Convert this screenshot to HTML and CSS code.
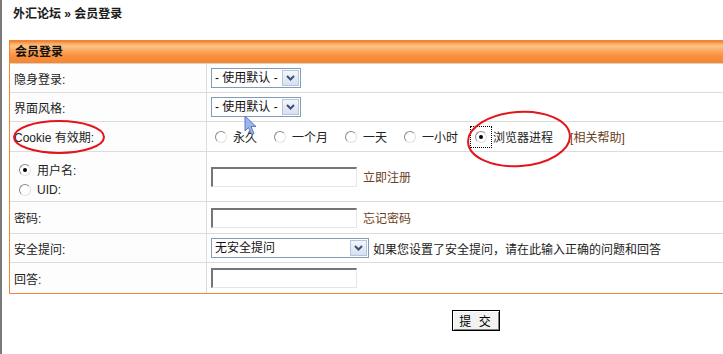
FILE: index.html
```html
<!DOCTYPE html>
<html lang="zh">

<head>
    <meta charset="UTF-8">
    <title>会员登录 - 外汇论坛</title>
    <link rel="stylesheet" href="styles.css">
</head>

<body>
    <div class="screen">
        <div class="nav">外汇论坛 &raquo; 会员登录</div>

        <div class="box">
            <div class="box-head">会员登录</div>

            <div class="row">
                <div class="label">隐身登录:</div>
                <div class="value">
                    <span class="select select-short">
                        <span class="select-text">- 使用默认 -</span>
                        <span class="select-btn"><svg width="9" height="6" viewBox="0 0 9 6"><path d="M1 1 L4.5 4.5 L8 1" /></svg></span>
                    </span>
                </div>
            </div>

            <div class="row">
                <div class="label">界面风格:</div>
                <div class="value">
                    <span class="select select-short">
                        <span class="select-text">- 使用默认 -</span>
                        <span class="select-btn"><svg width="9" height="6" viewBox="0 0 9 6"><path d="M1 1 L4.5 4.5 L8 1" /></svg></span>
                    </span>
                </div>
            </div>

            <div class="row row-cookie">
                <div class="label">Cookie 有效期:</div>
                <div class="value cookie-opts">
                    <label class="opt"><span class="radio"></span>永久</label>
                    <label class="opt"><span class="radio"></span>一个月</label>
                    <label class="opt"><span class="radio"></span>一天</label>
                    <label class="opt"><span class="radio"></span>一小时</label>
                    <label class="opt"><span class="focus-ring"><span class="radio checked"></span></span>浏览器进程</label>
                    <a class="link" href="#">[相关帮助]</a>
                </div>
            </div>

            <div class="row row-user">
                <div class="label label-stack">
                    <label class="opt-line"><span class="radio checked"></span>用户名:</label>
                    <label class="opt-line"><span class="radio"></span>UID:</label>
                </div>
                <div class="value">
                    <input class="field" type="text">
                    <a class="link after-field" href="#">立即注册</a>
                </div>
            </div>

            <div class="row row-pass">
                <div class="label">密码:</div>
                <div class="value">
                    <input class="field" type="password">
                    <a class="link after-field" href="#">忘记密码</a>
                </div>
            </div>

            <div class="row">
                <div class="label">安全提问:</div>
                <div class="value">
                    <span class="select select-long">
                        <span class="select-text">无安全提问</span>
                        <span class="select-btn"><svg width="9" height="6" viewBox="0 0 9 6"><path d="M1 1 L4.5 4.5 L8 1" /></svg></span>
                    </span>
                    <span class="hint">如果您设置了安全提问，请在此输入正确的问题和回答</span>
                </div>
            </div>

            <div class="row row-last">
                <div class="label">回答:</div>
                <div class="value">
                    <input class="field" type="text">
                </div>
            </div>
        </div>

        <div class="actions">
            <button class="submit">提 交</button>
        </div>

        <!-- red marks drawn over the screenshot -->
        <svg class="marks" width="723" height="354" viewBox="0 0 723 354">
            <ellipse cx="57" cy="137" rx="45" ry="16" />
            <ellipse cx="517" cy="139" rx="51" ry="27" transform="rotate(-4 517 139)" />
        </svg>

        <svg class="cursor" width="13" height="21" viewBox="0 0 13 21">
            <path d="M1 1 L1 16 L4.5 12.5 L7.5 19.5 L10 18.5 L7 11.5 L12 11.5 Z" />
        </svg>
    </div>
</body>

</html>
```

FILE: styles.css
```css
html, body {
    margin: 0;
    overflow: hidden;
}

body {
    background-color: #ffffff;
    color: #222222;
    font-family: 'Liberation Sans', 'Noto Sans CJK SC', sans-serif;
    font-size: 12px;
}

.screen {
    position: relative;
    height: 354px;
    box-sizing: border-box;
    border-left: 2px solid #7a7a7a;
    padding-top: 7px;
}

.nav {
    margin-left: 11px;
    line-height: 14px;
    font-weight: bold;
    color: #1a1a1a;
}

/* the box runs on past the right edge of the window */
.box {
    margin: 19px 0 0 7px;
    border: 1px solid #f1843a;
    border-right: none;
}

.box-head {
    height: 23px;
    box-sizing: border-box;
    padding-left: 5px;
    line-height: 22px;
    font-weight: bold;
    color: #111111;
    border-bottom: 1px solid #d2d2d2;
    background: linear-gradient(to bottom, #f47a28 0, #f9a25a 2px, #fcc686 5px, #fbad66 9px, #f98f3e 15px, #f8852f 22px);
}

.row {
    display: grid;
    grid-template-columns: 197px 1fr;
    height: 29px;
    box-sizing: border-box;
    border-bottom: 1px solid #dcdcdc;
}

.row-cookie {
    height: 30px;
}

.row-user {
    height: 50px;
}

.row-pass {
    height: 32px;
}

.row-last {
    height: 30px;
    border-bottom: none;
}

.label {
    display: flex;
    align-items: center;
    padding-left: 4px;
    border-right: 1px solid #dcdcdc;
    background-color: #fdfdfd;
}

.label-stack {
    flex-direction: column;
    align-items: flex-start;
    justify-content: center;
    padding: 6px 0 0 9px;
}

.opt-line {
    display: flex;
    align-items: center;
    height: 20px;
}

.value {
    display: flex;
    align-items: center;
    padding-left: 4px;
    white-space: nowrap;
}

.select {
    display: inline-flex;
    height: 20px;
    box-sizing: border-box;
    border: 1px solid #7f9db9;
    background-color: #ffffff;
}

.select-short {
    width: 90px;
}

.select-long {
    width: 158px;
}

.select-text {
    flex: 1;
    padding-left: 3px;
    line-height: 18px;
    color: #111111;
}

.select-btn {
    display: flex;
    align-items: center;
    justify-content: center;
    width: 15px;
    margin: 1px;
    border: 1px solid #b6c4de;
    background: linear-gradient(to bottom, #f3f6fb, #d7e0ef);
}

.select-btn path {
    fill: none;
    stroke: #3d4f78;
    stroke-width: 2;
}

.hint {
    margin-left: 4px;
}

.radio {
    display: inline-block;
    width: 12px;
    height: 12px;
    box-sizing: border-box;
    margin-right: 6px;
    border: 1px solid;
    border-color: #8a8a8a #e2e2e2 #e2e2e2 #8a8a8a;
    border-radius: 50%;
    background-color: #ffffff;
    position: relative;
}

.radio.checked::after {
    content: '';
    position: absolute;
    left: 3px;
    top: 3px;
    width: 4px;
    height: 4px;
    border-radius: 50%;
    background-color: #000000;
}

.focus-ring {
    display: inline-flex;
    padding: 4px;
    margin-right: 1px;
    border: 1px dotted #000000;
}

.focus-ring .radio {
    margin-right: 0;
}

.cookie-opts {
    padding-left: 8px;
}

.opt {
    display: inline-flex;
    align-items: center;
    margin-right: 17px;
}

.cookie-opts .opt:nth-child(5) {
    margin-left: -5px;
}

.link {
    color: #6a4022;
    text-decoration: none;
}

.after-field {
    margin-left: 6px;
}

.field {
    width: 146px;
    height: 20px;
    box-sizing: border-box;
    margin: 0;
    padding: 0 2px;
    border-style: solid;
    border-width: 2px 1px 1px 2px;
    border-color: #767676 #e6e6e6 #e6e6e6 #767676;
    background-color: #ffffff;
}

.actions {
    padding: 16px 0 0 450px;
}

.submit {
    width: 48px;
    height: 21px;
    padding: 0;
    font-family: 'Liberation Sans', 'Noto Sans CJK SC', sans-serif;
    font-size: 12px;
    letter-spacing: 2px;
    color: #000000;
    background-color: #f2f2f2;
    border: 1px solid #000000;
    box-shadow: inset 1px 1px 0 #ffffff, inset -1px -1px 0 #808080;
    cursor: pointer;
}

.marks {
    position: absolute;
    left: 0;
    top: 0;
    pointer-events: none;
}

.marks ellipse {
    fill: none;
    stroke: #e3141a;
    stroke-width: 2;
}

.cursor {
    position: absolute;
    left: 242px;
    top: 115px;
    pointer-events: none;
}

.cursor path {
    fill: #9ab6ec;
    stroke: #5677c4;
    stroke-width: 1;
}
```
